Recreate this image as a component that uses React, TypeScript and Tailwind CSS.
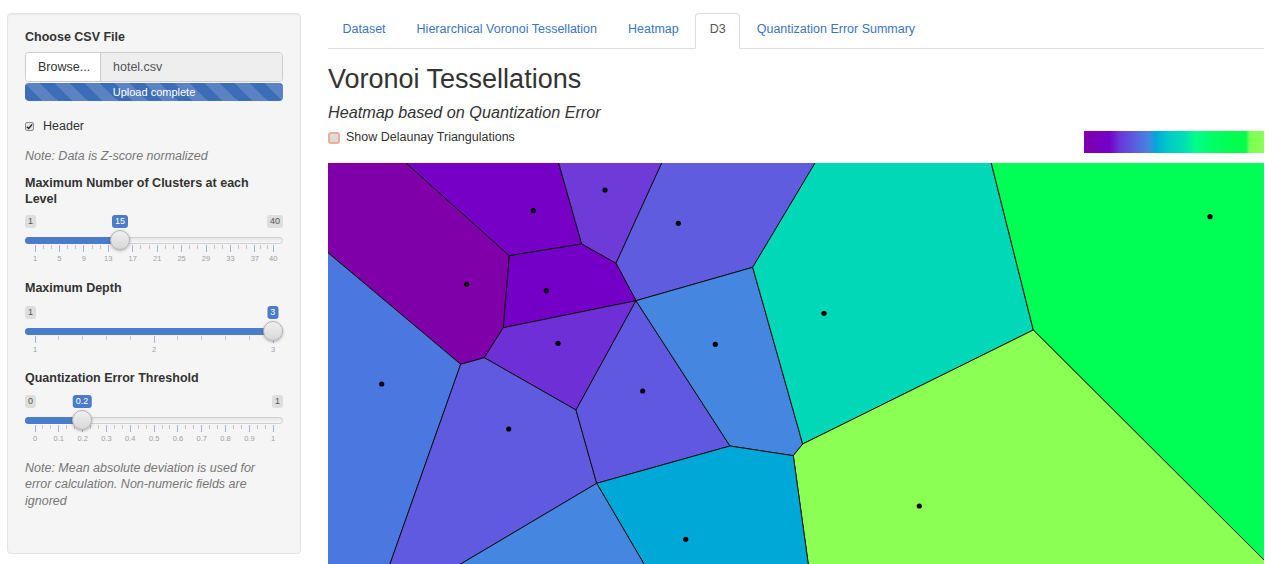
import React from "react";

const font = { fontFamily: "'Liberation Sans', Arial, sans-serif" };

// track geometry inside the sidebar content box (258px wide)
const TICK_START = 9.5;
const TICK_SPAN = 238.2;

type SliderProps = {
  min: number;
  max: number;
  value: number;
  majors: number[];
  small: number;
  hideMax?: boolean;
};

function Slider({ min, max, value, majors, small, hideMax }: SliderProps) {
  const pos = (v: number) => TICK_START + ((v - min) / (max - min)) * TICK_SPAN;
  const fmt = (v: number) => String(Math.round(v * 10) / 10);
  const minor: number[] = [];
  for (let i = 0; i < majors.length - 1; i++) {
    const a = pos(majors[i]);
    const b = pos(majors[i + 1]);
    for (let k = 1; k <= small; k++) minor.push(a + ((b - a) * k) / (small + 1));
  }
  const vx = pos(value);

  return (
    <div className="relative h-[50px]">
      <span className="absolute left-0 top-0 rounded-[3px] bg-[#dedede] px-[3px] text-[9px] leading-[13px] text-[#555]">
        {fmt(min)}
      </span>
      {!hideMax && (
        <span className="absolute right-0 top-0 rounded-[3px] bg-[#dedede] px-[3px] text-[9px] leading-[13px] text-[#555]">
          {fmt(max)}
        </span>
      )}
      <span
        className="absolute top-0 -translate-x-1/2 rounded-[3px] bg-[#4a7cc9] px-[3px] text-[9px] leading-[13px] text-white"
        style={{ left: vx }}
      >
        {fmt(value)}
      </span>

      <div className="absolute left-0 right-0 top-[22px] h-[7px] rounded-full border border-[#cfcfcf] bg-gradient-to-b from-[#e6e6e6] to-[#f7f7f7]" />
      <div
        className="absolute left-0 top-[22px] h-[7px] rounded-l-full bg-[#4a7cc9]"
        style={{ width: vx }}
      />

      {majors.map((m) => (
        <div key={"M" + m}>
          <div className="absolute top-[30px] h-[7px] w-px bg-[#9fb5dc]" style={{ left: pos(m) }} />
          <span
            className="absolute top-[39px] -translate-x-1/2 text-[7.5px] leading-[10px] text-[#a0a0a0]"
            style={{ left: pos(m) + 0.5 }}
          >
            {fmt(m)}
          </span>
        </div>
      ))}
      {minor.map((x, i) => (
        <div key={"m" + i} className="absolute top-[30px] h-[4px] w-px bg-[#c4c4c4]" style={{ left: x }} />
      ))}

      <div
        className="absolute top-[15px] h-[20px] w-[20px] -translate-x-1/2 rounded-full border border-[#b5b5b5] bg-gradient-to-b from-[#f0f0f0] to-[#d8d8d8] shadow-[0_1px_3px_rgba(0,0,0,0.3)]"
        style={{ left: vx }}
      />
    </div>
  );
}

// boundary vertices pushed just outside the view so the outer edges carry no stroke
const cells = [
  { c: "#7f00a8", p: "325,160 402.7,160 509.3,255.7 503.3,327.7 484.3,357.7 460.7,364.3 325,250.2" },
  { c: "#7600c6", p: "402.7,160 557.8,160 581.7,244 509.3,255.7" },
  { c: "#6e3ad8", p: "557.8,160 663.1,160 616,263.3 581.7,244" },
  { c: "#5f5ce0", p: "663.1,160 816.8,160 752.7,267.3 636,300.7 616,263.3" },
  { c: "#7400c8", p: "509.3,255.7 581.7,244 616,263.3 636,300.7 503.3,327.7" },
  { c: "#6e30d6", p: "503.3,327.7 636,300.7 576,410 484.3,357.7" },
  { c: "#4a78e0", p: "325,250.2 460.7,364.3 382.2,586 325,586" },
  { c: "#605ae0", p: "460.7,364.3 484.3,357.7 576,410 596.7,483.3 423.6,586 382.2,586" },
  { c: "#6058e0", p: "636,300.7 730,446 596.7,483.3 576,410" },
  { c: "#4486e0", p: "636,300.7 752.7,267.3 802.7,444 793.3,455.7 730,446" },
  { c: "#00d8b8", p: "752.7,267.3 816.8,160 990.5,160 1033.3,330 802.7,444" },
  { c: "#00ff55", p: "990.5,160 1267,160 1267,563 1033.3,330" },
  { c: "#8cff55", p: "802.7,444 1033.3,330 1267,563 1267,586 811.3,586 793.3,455.7" },
  { c: "#00a8d8", p: "596.7,483.3 730,446 793.3,455.7 811.3,586 656.9,586" },
  { c: "#4486e0", p: "423.6,586 596.7,483.3 656.9,586" },
];

const seeds = [
  [533.3, 210.7], [605, 190], [678.3, 223.3], [466.7, 284.3], [546.3, 290.7],
  [558, 343.3], [381.7, 384], [715.3, 344.3], [642.7, 391], [508.7, 429],
  [685.7, 539.3], [824, 313.3], [1210, 216.7], [919.3, 506],
];

const tabs = ["Dataset", "Hierarchical Voronoi Tessellation", "Heatmap", "D3", "Quantization Error Summary"];

export default function App() {
  return (
    <div className="h-[564px] overflow-hidden bg-white text-[12.5px] text-[#333]" style={font}>
      <div className="flex px-[7px] pt-[13px]">
        {/* sidebar */}
        <aside className="h-[541px] w-[294px] shrink-0 rounded-[4px] border border-[#e3e3e3] bg-[#f5f5f5] px-[17px] pt-[15px] shadow-[inset_0_1px_1px_rgba(0,0,0,0.05)]">
          <div className="mb-[6px] font-bold leading-[17px]">Choose CSV File</div>
          <div className="flex h-[30px] overflow-hidden rounded-[4px] border border-[#ccc]">
            <div className="flex w-[75px] items-center border-r border-[#ccc] bg-white pl-[12px]">Browse...</div>
            <div className="flex flex-1 items-center bg-[#eee] pl-[12px] text-[#555]">hotel.csv</div>
          </div>
          <div className="mt-px flex h-[18px] items-center justify-center rounded-[4px] bg-[#3e6db8] bg-[linear-gradient(45deg,rgba(255,255,255,.15)_25%,transparent_25%,transparent_50%,rgba(255,255,255,.15)_50%,rgba(255,255,255,.15)_75%,transparent_75%,transparent)] bg-[length:30px_30px] text-[11px] text-white">
            Upload complete
          </div>

          <div className="mt-[17px] flex items-center leading-[17px]">
            <span className="flex h-[9px] w-[9px] items-center justify-center rounded-[2px] border border-[#8a8a8a] bg-[#e6e6e6]">
              <svg width="7" height="7" viewBox="0 0 8 8">
                <path d="M1 4.2 L3.1 6.3 L7 1.6" stroke="#222" strokeWidth="1.6" fill="none" />
              </svg>
            </span>
            <span className="ml-[9px]">Header</span>
          </div>

          <div className="mt-[12.5px] italic leading-[17px] text-[#777]">Note: Data is Z-score normalized</div>

          <div className="mt-[10px] mb-[7.5px] font-bold leading-[16.5px]">Maximum Number of Clusters at each Level</div>
          <Slider min={1} max={40} value={15} majors={[1, 5, 9, 13, 17, 21, 25, 29, 33, 37, 40]} small={2} />

          <div className="mt-[15px] mb-[8.5px] font-bold leading-[17px]">Maximum Depth</div>
          <Slider min={1} max={3} value={3} majors={[1, 2, 3]} small={4} hideMax />

          <div className="mt-[14px] mb-[8px] font-bold leading-[17px]">Quantization Error Threshold</div>
          <Slider min={0} max={1} value={0.2} majors={[0, 0.1, 0.2, 0.3, 0.4, 0.5, 0.6, 0.7, 0.8, 0.9, 1]} small={2} />

          <div className="mt-[15px] italic leading-[16.7px] text-[#777]">
            Note: Mean absolute deviation is used for error calculation. Non-numeric fields are ignored
          </div>
        </aside>

        {/* main */}
        <main className="ml-[27px] w-[936px] shrink-0">
          <ul className="flex border-b border-[#ddd]">
            {tabs.map((t) => (
              <li key={t} className="-mb-px mr-[2px]">
                <span
                  className={
                    t === "D3"
                      ? "block rounded-t-[4px] border border-[#ddd] border-b-white bg-white px-[13.5px] pt-[7px] pb-[10px] leading-[17px] text-[#555]"
                      : "block rounded-t-[4px] border border-transparent px-[13.5px] pt-[7px] pb-[10px] leading-[17px] text-[#3b75bf]"
                  }
                >
                  {t}
                </span>
              </li>
            ))}
          </ul>

          <h3 className="mt-[15.5px] text-[27px] leading-[29px] text-[#333]">Voronoi Tessellations</h3>
          <div className="mt-[8.5px] text-[16.2px] italic leading-[20px] text-[#333]">Heatmap based on Quantization Error</div>

          <div className="mt-[7px] flex items-start justify-between">
            <div className="flex items-center leading-[17px]">
              <span className="mt-px h-[12px] w-[12px] rounded-[3px] border-2 border-[#f3ad94] bg-[#dcdcdc]" />
              <span className="ml-[6px]">Show Delaunay Triangulations</span>
            </div>
            <div className="mt-[2px] h-[22px] w-[180px] bg-[linear-gradient(to_right,#7f00a8_0%,#7800c2_10%,#7400c8_14%,#6a38d8_20%,#5a62e0_29%,#4585e0_36%,#00a8d8_40%,#00c8c8_46%,#00e0b2_56%,#00ff8a_62%,#00ff6a_70%,#00ff52_80%,#00ff4c_90%,#7cff55_92%,#88ff55_100%)]" />
          </div>

          <svg className="mt-[10px] block overflow-hidden" width="936" height="420" viewBox="328 163 936 420">
            {cells.map((cell, i) => (
              <polygon key={i} points={cell.p} fill={cell.c} stroke="#111" strokeWidth="1" strokeLinejoin="round" />
            ))}
            {seeds.map(([x, y], i) => (
              <circle key={i} cx={x} cy={y} r="2.6" fill="#000" />
            ))}
          </svg>
        </main>
      </div>
    </div>
  );
}
